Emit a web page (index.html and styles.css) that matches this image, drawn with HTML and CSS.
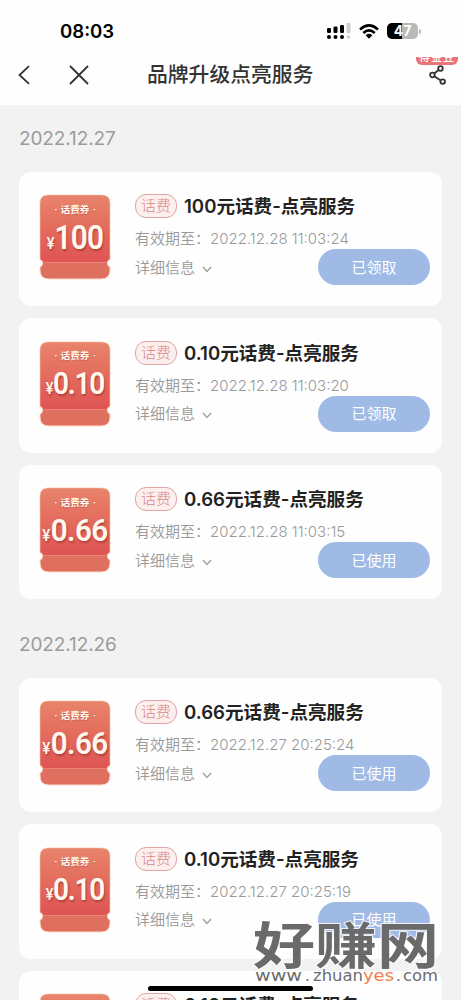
FILE: index.html
```
<!DOCTYPE html>
<html lang="zh-CN">
  <head>
    <meta charset="utf-8">
    <title>品牌升级点亮服务</title>
    <link rel="stylesheet" href="styles.css">
  </head>
  <body>
    <svg class="defs" width="0" height="0">
      <defs>
        <linearGradient id="ticketTop" x1="0" y1="0" x2="0" y2="1">
          <stop offset="0" stop-color="#e8846c" />
          <stop offset="0.400" stop-color="#e4705f" />
          <stop offset="1" stop-color="#df5454" />
        </linearGradient>
        <symbol id="ticket" viewBox="0 0 72 86">
          <path d="M9 1H63Q71 1 71 9V65.500A4 4 0 0 0 71 73V76Q71 85 62 85H10Q1 85 1 76V73A4 4 0 0 0 1 65.500V9Q1 1 9 1Z" fill="#df705f" stroke="#fbd9c4" stroke-width="1" />
          <path d="M9 1.500H63Q70.500 1.500 70.500 9V65.300Q67.500 66 67.300 68H4.700Q4.500 66 1.500 65.300V9Q1.500 1.500 9 1.500Z" fill="url(#ticketTop)" />
          <path d="M5 68.500H67" stroke="#e98678" stroke-width="1" />
        </symbol>
        <symbol id="arrow" viewBox="0 0 10 7">
          <path d="M1 1L5 5.500L9 1" fill="none" stroke="#a0a0a0" stroke-width="1.400" />
        </symbol>
      </defs>
    </svg>

    <div class="header">
      <div class="status-bar">
        <span class="clock">08:03</span>
        <svg class="signal" width="24" height="17" viewBox="0 0 24 17">
          <g fill="#000">
            <rect x="0" y="5" width="4" height="5" rx="1.200" />
            <rect x="6.500" y="3.500" width="4" height="6.500" rx="1.200" />
            <rect x="13" y="2" width="4" height="8" rx="1.200" />
            <circle cx="2" cy="14" r="2" />
            <circle cx="8.500" cy="14" r="2" />
            <circle cx="15" cy="14" r="2" />
          </g>
          <g fill="#cfcfcf">
            <rect x="19.500" y="0" width="4" height="10" rx="1.200" />
            <circle cx="21.500" cy="14" r="1.800" />
          </g>
        </svg>
        <svg class="wifi" width="20" height="15" viewBox="0 0 20 15">
          <g fill="none" stroke="#000" stroke-width="2.600">
            <path d="M1 5.500Q10 -2.600 19 5.500" />
            <path d="M4.300 9Q10 3.900 15.700 9" />
          </g>
          <path d="M6.600 11.200Q10 8.400 13.400 11.200L10 14.800Z" />
        </svg>
        <div class="battery"><span>47</span></div>
      </div>
      <div class="nav-bar">
        <svg class="back" width="12" height="20" viewBox="0 0 12 20">
          <path d="M11 1.200L1.500 10L11 18.800" fill="none" stroke="#333" stroke-width="1.800" />
        </svg>
        <svg class="close" width="20" height="20" viewBox="0 0 20 20">
          <path d="M1 1L19 19M19 1L1 19" fill="none" stroke="#333" stroke-width="1.800" />
        </svg>
        <h1>品牌升级点亮服务</h1>
        <div class="share">
          <div class="share-tag"><span>得金豆</span></div>
          <svg width="18" height="20" viewBox="0 0 18 20">
            <g fill="none" stroke="#333" stroke-width="1.800">
              <circle cx="11.500" cy="3.500" r="2.300" />
              <circle cx="3.400" cy="10" r="2.300" />
              <circle cx="13.700" cy="16.600" r="2.300" />
              <path d="M5.200 8.500L9.700 5M5.300 11.300L11.800 15.400" />
            </g>
          </svg>
        </div>
      </div>
    </div>

    <div class="list">
      <div class="date">2022.12.27</div>

      <div class="card">
        <div class="ticket">
          <svg><use href="#ticket" /></svg>
          <div class="ticket-name">· 话费券 ·</div>
          <div class="ticket-price"><small>¥</small>100</div>
        </div>
        <div class="info">
          <div class="title"><span class="tag">话费</span><b>100元话费-点亮服务</b></div>
          <div class="expire"><span>有效期至：</span>2022.12.28 11:03:24</div>
          <div class="detail">详细信息 <svg><use href="#arrow" /></svg></div>
        </div>
        <button class="btn">已领取</button>
      </div>

      <div class="card">
        <div class="ticket">
          <svg><use href="#ticket" /></svg>
          <div class="ticket-name">· 话费券 ·</div>
          <div class="ticket-price narrow"><small>¥</small>0.10</div>
        </div>
        <div class="info">
          <div class="title"><span class="tag">话费</span><b>0.10元话费-点亮服务</b></div>
          <div class="expire"><span>有效期至：</span>2022.12.28 11:03:20</div>
          <div class="detail">详细信息 <svg><use href="#arrow" /></svg></div>
        </div>
        <button class="btn">已领取</button>
      </div>

      <div class="card">
        <div class="ticket">
          <svg><use href="#ticket" /></svg>
          <div class="ticket-name">· 话费券 ·</div>
          <div class="ticket-price wide"><small>¥</small>0.66</div>
        </div>
        <div class="info">
          <div class="title"><span class="tag">话费</span><b>0.66元话费-点亮服务</b></div>
          <div class="expire"><span>有效期至：</span>2022.12.28 11:03:15</div>
          <div class="detail">详细信息 <svg><use href="#arrow" /></svg></div>
        </div>
        <button class="btn">已使用</button>
      </div>

      <div class="date second">2022.12.26</div>

      <div class="card">
        <div class="ticket">
          <svg><use href="#ticket" /></svg>
          <div class="ticket-name">· 话费券 ·</div>
          <div class="ticket-price wide"><small>¥</small>0.66</div>
        </div>
        <div class="info">
          <div class="title"><span class="tag">话费</span><b>0.66元话费-点亮服务</b></div>
          <div class="expire"><span>有效期至：</span>2022.12.27 20:25:24</div>
          <div class="detail">详细信息 <svg><use href="#arrow" /></svg></div>
        </div>
        <button class="btn">已使用</button>
      </div>

      <div class="card">
        <div class="ticket">
          <svg><use href="#ticket" /></svg>
          <div class="ticket-name">· 话费券 ·</div>
          <div class="ticket-price narrow"><small>¥</small>0.10</div>
        </div>
        <div class="info">
          <div class="title"><span class="tag">话费</span><b>0.10元话费-点亮服务</b></div>
          <div class="expire"><span>有效期至：</span>2022.12.27 20:25:19</div>
          <div class="detail">详细信息 <svg><use href="#arrow" /></svg></div>
        </div>
        <button class="btn">已使用</button>
      </div>

      <div class="card last">
        <div class="ticket">
          <svg><use href="#ticket" /></svg>
        </div>
        <div class="info">
          <div class="title"><span class="tag">话费</span><b>0.10元话费-点亮服务</b></div>
        </div>
      </div>
    </div>

    <div class="home-bar"></div>
    <svg class="watermark" width="190" height="66" viewBox="0 0 190 66">
      <text class="mark-name" x="1" y="44" textLength="186" lengthAdjust="spacingAndGlyphs">好赚网</text>
      <g class="mark-url">
        <text x="3" y="61" textLength="47" lengthAdjust="spacingAndGlyphs">www</text>
        <text x="53" y="61">.</text>
        <text x="61" y="61" textLength="50" lengthAdjust="spacingAndGlyphs">zhuan</text>
        <text class="orange" x="111" y="61" textLength="31" lengthAdjust="spacingAndGlyphs">yes</text>
        <text x="144" y="61">.</text>
        <text x="151" y="61" textLength="35" lengthAdjust="spacingAndGlyphs">com</text>
      </g>
    </svg>
  </body>
</html>
```
FILE: styles.css
```
* {
  box-sizing: border-box;
}

body {
  margin: 0;
  position: relative;
  height: 1000px;
  overflow: hidden;
  background-color: #f2f2f2;
  font-family: Inter, "Noto Sans CJK SC", sans-serif;
}

.defs {
  position: absolute;
}

.header {
  height: 105px;
  background-color: #fefefe;
}

.status-bar {
  height: 50px;
  padding: 12px 43px 0 60px;
  display: flex;
  align-items: center;
}

.clock {
  width: 267px;
  font-size: 18.6px;
  font-weight: 600;
  line-height: 38px;
}

.wifi {
  margin-left: 8px;
}

.battery {
  position: relative;
  width: 31px;
  height: 16px;
  margin-left: 8px;
  border-radius: 5px;
  background: linear-gradient(to right, #000 48%, #b9b9b9 48%);
  color: white;
  font-size: 14px;
  font-weight: 700;
  line-height: 16px;
  text-align: center;
}

.battery::after {
  content: "";
  position: absolute;
  right: -3px;
  top: 6px;
  width: 2px;
  height: 5px;
  border-radius: 0 2px 2px 0;
  background-color: #b9b9b9;
}

.nav-bar {
  height: 50px;
  padding: 0 14px 0 18px;
  display: flex;
  align-items: center;
}

.close {
  margin-left: 39px;
}

h1 {
  margin: 0 0 0 58px;
  color: #333;
  font-size: 20.8px;
  font-weight: 500;
  line-height: 30px;
}

.share {
  position: relative;
  height: 20px;
  margin-left: auto;
}

.share-tag {
  position: absolute;
  left: -13px;
  top: -8px;
  width: 42px;
  height: 8px;
  overflow: hidden;
  border-radius: 0 0 6px 6px;
  background-color: #e8757a;
  color: white;
  font-size: 11px;
  font-weight: 500;
  line-height: 1px;
  letter-spacing: 1px;
  text-align: center;
}

.list {
  padding: 0 19px;
}

.date {
  height: 66.5px;
  padding-top: 21px;
  color: #9b9b9b;
  font-size: 19px;
  line-height: 26px;
  letter-spacing: -0.1px;
}

.card {
  position: relative;
  height: 134.5px;
  margin-bottom: 12px;
  padding: 23px 12px 0 20px;
  display: flex;
  border-radius: 12px;
  background-color: #fefefe;
}

.card.last {
  height: 29px;
  margin-bottom: 0;
  overflow: hidden;
  border-radius: 12px 12px 0 0;
}

.ticket {
  position: relative;
  width: 72px;
  height: 86px;
  color: #fff8ee;
  text-align: center;
}

.ticket > svg {
  position: absolute;
  left: -0.5px;
  top: -0.5px;
  width: 72px;
  height: 86px;
}

.ticket-name {
  position: relative;
  padding-top: 8px;
  font-size: 9.6px;
  font-weight: 700;
  line-height: 13px;
  word-spacing: 1px;
  text-shadow: 0 1px 1px rgba(150, 50, 40, 0.4);
}

.ticket-price {
  position: relative;
  margin: 3px -8px 0;
  font-family: Roboto, sans-serif;
  font-size: 33px;
  font-weight: 600;
  line-height: 38px;
  letter-spacing: -0.8px;
  white-space: nowrap;
  text-shadow: 1px 2px 2px rgba(150, 50, 40, 0.6);
  transform: scaleX(0.9);
}

.ticket-price.narrow {
  font-size: 31.5px;
  letter-spacing: -1.4px;
  transform: scaleX(0.89);
}

.ticket-price.wide {
  font-size: 31.5px;
  letter-spacing: -0.6px;
  transform: scaleX(0.94);
}

.ticket-price small {
  margin-right: 1px;
  font-size: 16px;
  font-weight: 500;
}

.info {
  margin-left: 24px;
}

.title {
  height: 24px;
  display: flex;
  align-items: center;
  white-space: nowrap;
}

.title b {
  margin: -1px 0 0 7px;
  color: #222;
  font-size: 18.6px;
  font-weight: 600;
  line-height: 24px;
}

.tag {
  width: 42px;
  height: 24px;
  margin-top: -1px;
  border: 1px solid #e2a3a5;
  border-radius: 11px;
  background-color: #fcf0ef;
  color: #dc8689;
  font-size: 15px;
  font-weight: 300;
  line-height: 21px;
  text-align: center;
}

.expire,
.detail {
  color: #999;
  font-size: 15px;
  font-weight: 350;
  line-height: 20px;
  white-space: nowrap;
}

.expire {
  margin-top: 10.5px;
}

.detail {
  margin-top: 8.5px;
}

.detail svg {
  width: 10px;
  height: 7px;
  margin-left: 3px;
}

.btn {
  position: absolute;
  right: 12px;
  bottom: 21px;
  width: 112px;
  height: 36px;
  padding: 0;
  border: 0;
  border-radius: 18px;
  background-color: #9ebae5;
  color: #fff;
  font-family: inherit;
  font-size: 15px;
  line-height: 35px;
}

.home-bar {
  position: absolute;
  left: 148px;
  top: 986px;
  width: 165px;
  height: 5px;
  border-radius: 3px;
  background-color: #000;
}

.watermark {
  position: absolute;
  left: 252px;
  top: 920px;
}

.mark-name {
  fill: #6a6a6a;
  stroke: rgba(255, 255, 255, 0.8);
  stroke-width: 2px;
  paint-order: stroke;
  font-family: "Noto Sans CJK SC", sans-serif;
  font-size: 50px;
  font-weight: 700;
}

.mark-url {
  fill: #6c6c6c;
  stroke: #fff;
  stroke-width: 1px;
  paint-order: stroke;
  font-family: "DejaVu Sans", sans-serif;
  font-size: 15px;
}

.mark-url .orange {
  fill: #f08050;
}
```
